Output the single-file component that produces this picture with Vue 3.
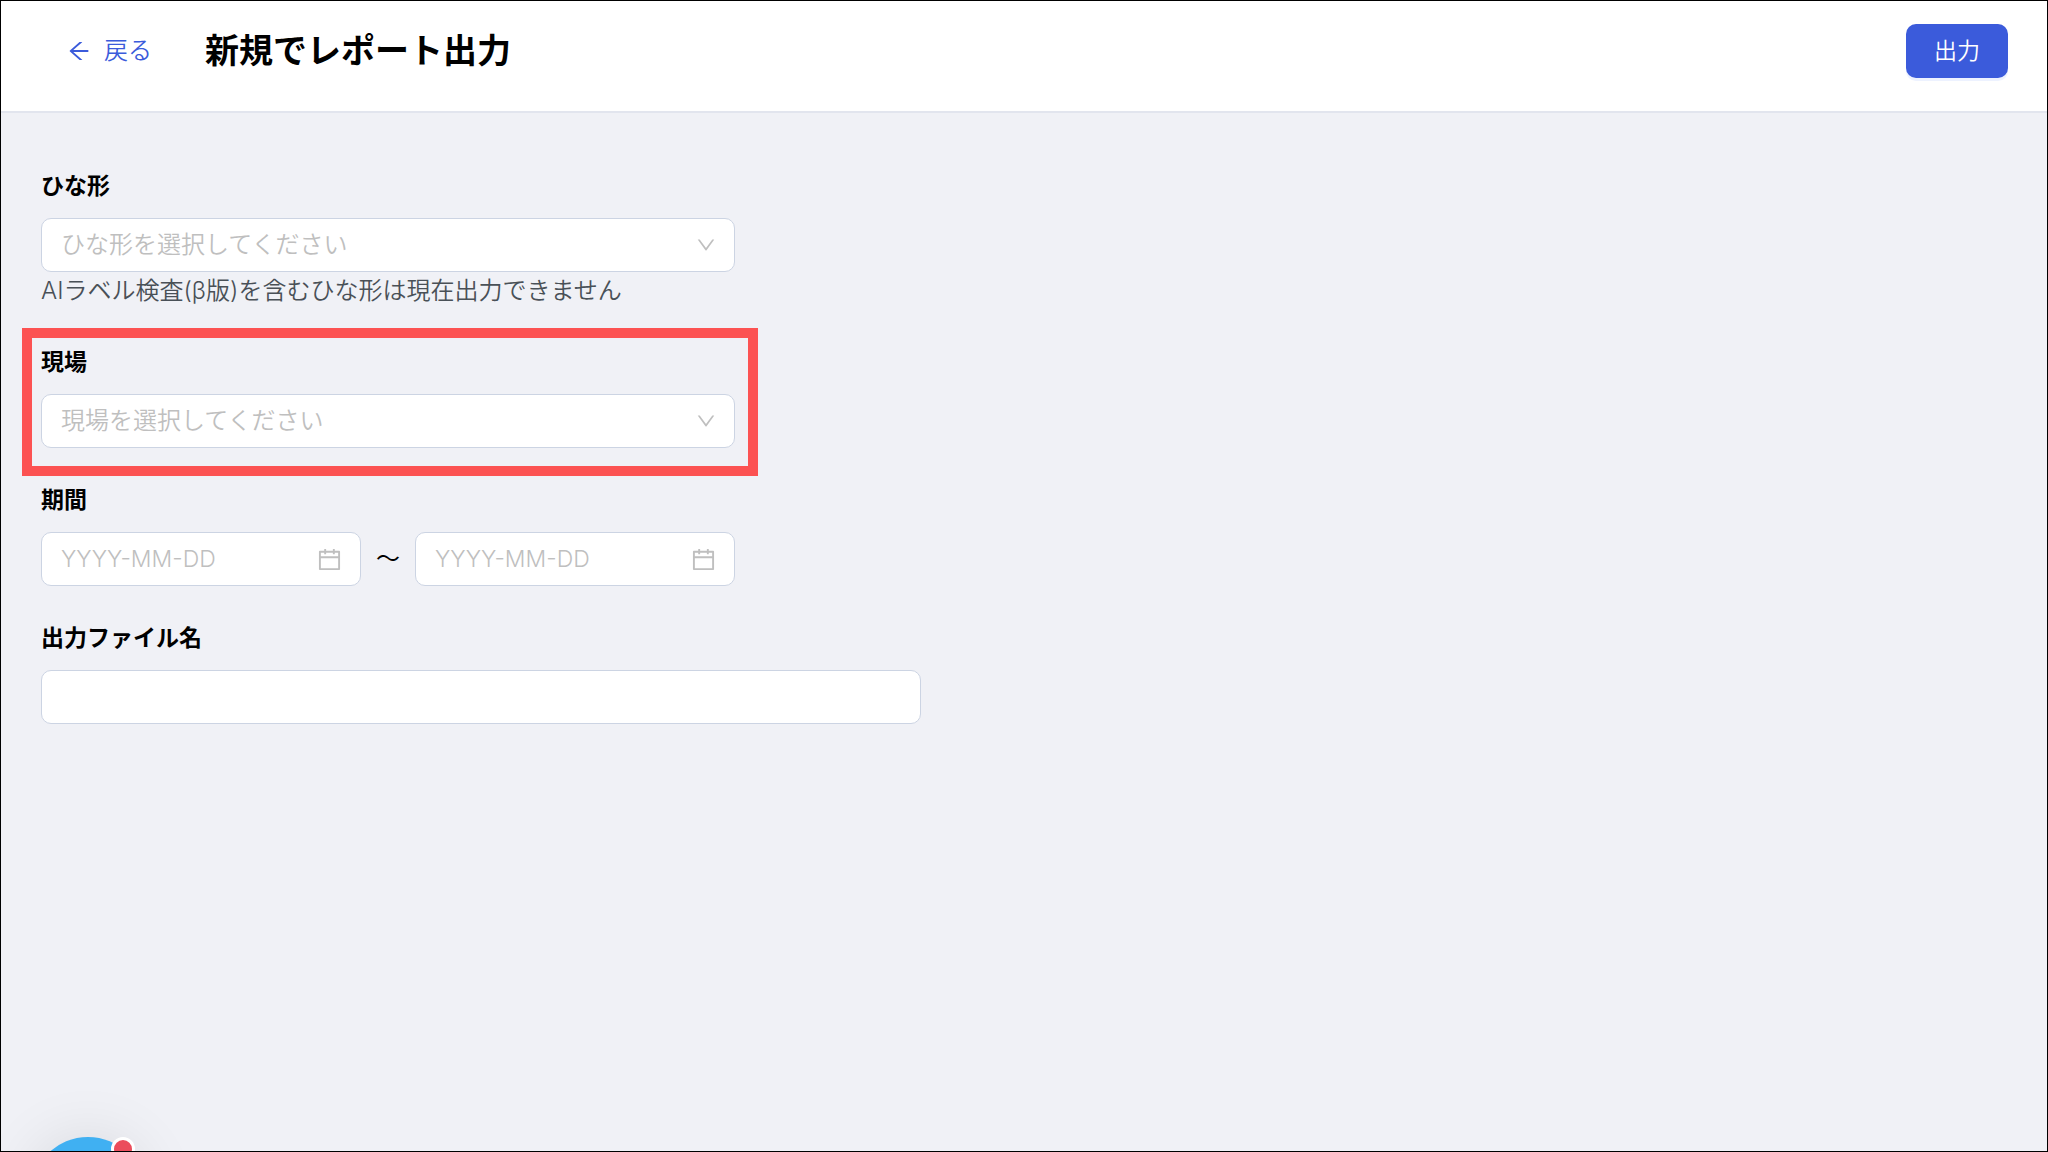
<script setup>
	import {
		ref
	} from 'vue'

	const template = ref('')
	const site = ref('')
	const dateFrom = ref('')
	const dateTo = ref('')
	const fileName = ref('')
</script>

<template>
	<div class="page">
		<header class="header">
			<a class="back" href="#">
				<svg class="back-icon" viewBox="0 0 1024 1024" aria-hidden="true">
					<path d="M872 474H286.9l350.2-304c5.6-4.9 2.2-14-5.2-14h-88.5c-3.9 0-7.6 1.4-10.5 3.9L155 487.8a31.96 31.96 0 000 48.3L535.1 866c1.5 1.3 3.3 2 5.2 2h91.5c7.4 0 10.8-9.2 5.2-14L286.9 550H872c4.4 0 8-3.6 8-8v-60c0-4.4-3.6-8-8-8z" />
				</svg>
				<span>戻る</span>
			</a>
			<h1 class="title">新規でレポート出力</h1>
			<button class="export-button" type="submit" form="report-form">出力</button>
		</header>

		<form id="report-form" class="form" @submit.prevent>
			<div class="item">
				<label class="label" for="template">ひな形</label>
				<div class="control">
					<select id="template" v-model="template" class="field" :class="{ empty: !template }">
						<option value="" disabled hidden>ひな形を選択してください</option>
					</select>
					<svg class="arrow-icon" viewBox="0 0 1024 1024" aria-hidden="true">
						<path d="M884 256h-75c-5.1 0-9.9 2.5-12.9 6.6L512 654.2 227.9 262.6c-3-4.1-7.8-6.6-12.9-6.6h-75c-6.5 0-10.3 7.4-6.5 12.7l352.6 486.1c12.8 17.6 39 17.6 51.7 0l352.6-486.1c3.9-5.3.1-12.7-6.4-12.7z" />
					</svg>
				</div>
				<p class="note">AIラベル検査(β版)を含むひな形は現在出力できません</p>
			</div>

			<div class="item marked">
				<label class="label" for="site">現場</label>
				<div class="control">
					<select id="site" v-model="site" class="field" :class="{ empty: !site }">
						<option value="" disabled hidden>現場を選択してください</option>
					</select>
					<svg class="arrow-icon" viewBox="0 0 1024 1024" aria-hidden="true">
						<path d="M884 256h-75c-5.1 0-9.9 2.5-12.9 6.6L512 654.2 227.9 262.6c-3-4.1-7.8-6.6-12.9-6.6h-75c-6.5 0-10.3 7.4-6.5 12.7l352.6 486.1c12.8 17.6 39 17.6 51.7 0l352.6-486.1c3.9-5.3.1-12.7-6.4-12.7z" />
					</svg>
				</div>
			</div>

			<div class="item">
				<label class="label" for="date-from">期間</label>
				<div class="range">
					<div class="control">
						<input id="date-from" v-model="dateFrom" class="field date" type="text" placeholder="YYYY-MM-DD">
						<svg class="date-icon" viewBox="0 0 1024 1024" aria-hidden="true">
							<path d="M880 184H712v-64c0-4.4-3.6-8-8-8h-56c-4.4 0-8 3.6-8 8v64H384v-64c0-4.4-3.6-8-8-8h-56c-4.4 0-8 3.6-8 8v64H144c-17.7 0-32 14.3-32 32v664c0 17.7 14.3 32 32 32h736c17.7 0 32-14.3 32-32V216c0-17.7-14.3-32-32-32zm-40 656H184V460h656v380zM184 392V256h128v48c0 4.4 3.6 8 8 8h56c4.4 0 8-3.6 8-8v-48h256v48c0 4.4 3.6 8 8 8h56c4.4 0 8-3.6 8-8v-48h128v136H184z" />
						</svg>
					</div>
					<span class="tilde">〜</span>
					<div class="control">
						<input v-model="dateTo" class="field date" type="text" placeholder="YYYY-MM-DD" aria-label="終了日">
						<svg class="date-icon" viewBox="0 0 1024 1024" aria-hidden="true">
							<path d="M880 184H712v-64c0-4.4-3.6-8-8-8h-56c-4.4 0-8 3.6-8 8v64H384v-64c0-4.4-3.6-8-8-8h-56c-4.4 0-8 3.6-8 8v64H144c-17.7 0-32 14.3-32 32v664c0 17.7 14.3 32 32 32h736c17.7 0 32-14.3 32-32V216c0-17.7-14.3-32-32-32zm-40 656H184V460h656v380zM184 392V256h128v48c0 4.4 3.6 8 8 8h56c4.4 0 8-3.6 8-8v-48h256v48c0 4.4 3.6 8 8 8h56c4.4 0 8-3.6 8-8v-48h128v136H184z" />
						</svg>
					</div>
				</div>
			</div>

			<div class="item wide">
				<label class="label" for="file-name">出力ファイル名</label>
				<div class="control">
					<input id="file-name" v-model="fileName" class="field" type="text">
				</div>
			</div>
		</form>

		<button class="launcher" type="button" aria-label="チャット">
			<span class="badge"></span>
		</button>
	</div>
</template>

<style scoped>
	.page {
		position: relative;
		box-sizing: border-box;
		min-height: 100vh;
		overflow: hidden;
		border: 1px solid #000;
		background-color: #f0f1f6;
		color: #000;
		font-family: Inter, "Noto Sans CJK JP", sans-serif;
		font-size: 23px;
		line-height: 38px;
	}

	.header {
		display: flex;
		align-items: center;
		padding: 23px 39px 33px 65px;
		border-bottom: 2px solid #e2e5ee;
		background-color: #fff;
	}

	.back {
		display: flex;
		align-items: center;
		gap: 12px;
		color: #3b5bdb;
		font-size: 24px;
		font-weight: 350;
		text-decoration: none;
	}

	.back-icon {
		width: 26px;
		height: 26px;
		fill: currentColor;
	}

	.title {
		margin: 0 auto 0 53px;
		font-size: 34px;
		font-weight: 600;
	}

	.export-button {
		height: 54px;
		padding: 0 28px;
		border: none;
		border-radius: 10px;
		background-color: #3b5bdb;
		box-shadow: 0 3px 0 #edf2ff;
		color: #fff;
		font: inherit;
		font-weight: 350;
		cursor: pointer;
	}

	.form {
		display: flex;
		flex-direction: column;
		gap: 33px;
		padding: 54px 40px;
	}

	.item {
		position: relative;
		max-width: 694px;
	}

	.wide {
		max-width: 880px;
	}

	.marked::after {
		content: '';
		position: absolute;
		inset: -15px -23px -28px -19px;
		border: 10px solid #fc5252;
		pointer-events: none;
	}

	.label {
		display: block;
		margin-bottom: 13px;
		font-weight: 600;
	}

	.control {
		position: relative;
		flex: 1;
		min-width: 0;
	}

	.field {
		display: block;
		box-sizing: border-box;
		width: 100%;
		height: 54px;
		padding: 0 19px;
		border: 1px solid #ccd4e3;
		border-radius: 10px;
		outline: none;
		appearance: none;
		background-color: #fff;
		color: #000;
		font: inherit;
		font-size: 24px;
		font-weight: 350;
	}

	.field.date {
		font-size: 23px;
	}

	.field::placeholder,
	.field.empty {
		color: #bfbfbf;
		opacity: 1;
	}

	.arrow-icon,
	.date-icon {
		position: absolute;
		top: 0;
		bottom: 0;
		right: 18px;
		margin: auto 0;
		fill: #bfbfbf;
		pointer-events: none;
	}

	.arrow-icon {
		width: 22px;
		height: 22px;
	}

	.date-icon {
		width: 27px;
		height: 27px;
	}

	.note {
		margin: 0;
		color: #495057;
		font-size: 24px;
		font-weight: 350;
	}

	.range {
		display: flex;
		align-items: center;
	}

	.tilde {
		width: 54px;
		font-size: 24px;
		text-align: center;
	}

	.launcher {
		position: absolute;
		left: 30px;
		bottom: -100px;
		width: 114px;
		height: 114px;
		padding: 0;
		border: none;
		border-radius: 50%;
		background-color: #40b0f2;
		box-shadow: 0 0 60px rgba(0, 0, 0, 0.1);
		cursor: pointer;
	}

	.badge {
		position: absolute;
		top: 0;
		right: 10px;
		box-sizing: border-box;
		width: 24px;
		height: 24px;
		border: 3px solid #fff;
		border-radius: 50%;
		background-color: #eb4d5c;
	}
</style>

<style>
	body {
		margin: 0;
	}
</style>
